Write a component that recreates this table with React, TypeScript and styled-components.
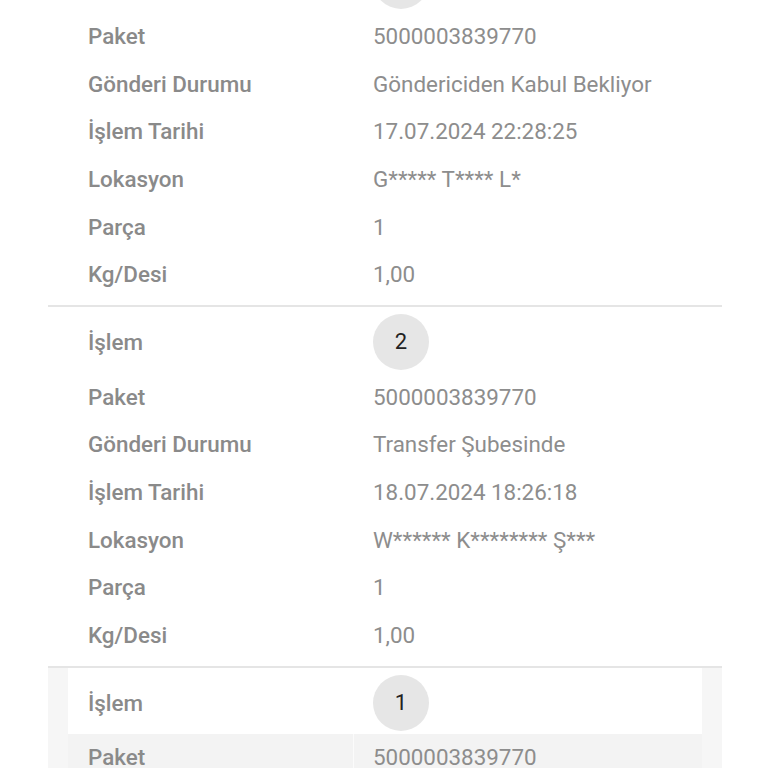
import React from "react";
import styled, { createGlobalStyle } from "styled-components";

const GlobalStyle = createGlobalStyle`
  html, body {
    margin: 0;
    padding: 0;
    background: #ffffff;
  }
  body {
    font-family: Roboto, "Noto Sans", "Liberation Sans", sans-serif;
  }
`;

const Page = styled.div`
  height: 768px;
  overflow: hidden;
  background: #ffffff;
`;

const List = styled.div`
  margin-top: -55.6px;
  display: flex;
  flex-direction: column;
`;

const Section = styled.section<{ $active?: boolean }>`
  margin: 0 46px 0 48px;
  border-top: 2px solid #e5e5e5;
  padding: 0 20px 7px;
  background: ${(p) => (p.$active ? "#f6f6f6" : "#ffffff")};
  display: flex;
  flex-direction: column;
`;

const Row = styled.div<{ $striped?: boolean; $tall?: boolean }>`
  display: grid;
  grid-template-columns: 285px 1fr;
  height: ${(p) => (p.$tall ? "66px" : "47.6px")};
  box-sizing: border-box;
  padding-top: ${(p) => (p.$tall ? "4px" : "0")};
  background: ${(p) => (p.$striped ? "#f3f3f3" : "#ffffff")};
`;

const Label = styled.div`
  display: flex;
  align-items: center;
  padding-left: 20px;
  font-size: 22.4px;
  font-weight: 500;
  color: #8a8a8a;
`;

const Value = styled.div<{ $striped?: boolean }>`
  display: flex;
  align-items: center;
  padding-left: 19px;
  font-size: 22.4px;
  font-weight: 400;
  color: #8d8d8d;
  border-left: ${(p) => (p.$striped ? "1px solid #fbfbfb" : "1px solid transparent")};
`;

const Badge = styled.div`
  width: 56px;
  height: 56px;
  border-radius: 50%;
  background: #e6e6e6;
  color: #222222;
  font-size: 22px;
  display: flex;
  align-items: center;
  justify-content: center;
`;

type Entry = {
  no: number;
  paket: string;
  durum: string;
  tarih: string;
  lokasyon: string;
  parca: string;
  kg: string;
};

const entries: Entry[] = [
  {
    no: 3,
    paket: "5000003839770",
    durum: "Göndericiden Kabul Bekliyor",
    tarih: "17.07.2024 22:28:25",
    lokasyon: "G***** T**** L*",
    parca: "1",
    kg: "1,00",
  },
  {
    no: 2,
    paket: "5000003839770",
    durum: "Transfer Şubesinde",
    tarih: "18.07.2024 18:26:18",
    lokasyon: "W****** K******** Ş***",
    parca: "1",
    kg: "1,00",
  },
  {
    no: 1,
    paket: "5000003839770",
    durum: "Kabul Edildi",
    tarih: "17.07.2024 22:28:25",
    lokasyon: "G***** T**** L*",
    parca: "1",
    kg: "1,00",
  },
];

function EntrySection({ e, active }: { e: Entry; active?: boolean }) {
  const rows: [string, string][] = [
    ["Paket", e.paket],
    ["Gönderi Durumu", e.durum],
    ["İşlem Tarihi", e.tarih],
    ["Lokasyon", e.lokasyon],
    ["Parça", e.parca],
    ["Kg/Desi", e.kg],
  ];
  return (
    <Section $active={active}>
      <Row $tall>
        <Label>İşlem</Label>
        <Value>
          <Badge>{e.no}</Badge>
        </Value>
      </Row>
      {rows.map(([l, v], i) => {
        const striped = !!active && i % 2 === 0;
        return (
          <Row key={l} $striped={striped}>
            <Label>{l}</Label>
            <Value $striped={striped}>{v}</Value>
          </Row>
        );
      })}
    </Section>
  );
}

export default function App() {
  return (
    <Page>
      <GlobalStyle />
      <List>
        {entries.map((e, i) => (
          <EntrySection key={e.no} e={e} active={i === 2} />
        ))}
      </List>
    </Page>
  );
}
